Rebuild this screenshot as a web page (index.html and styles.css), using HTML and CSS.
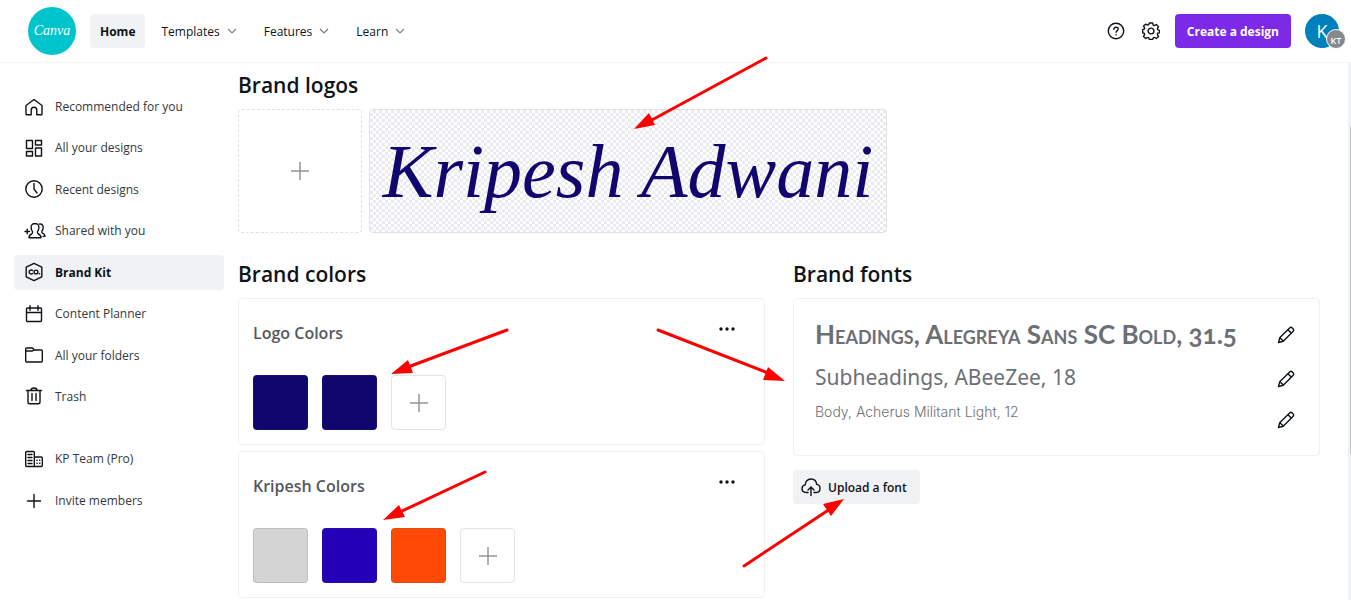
FILE: index.html
```html
<!DOCTYPE html>
<html lang="en">
<head>
<meta charset="utf-8">
<meta name="viewport" content="width=device-width, initial-scale=1">
<title>Brand Kit - Canva</title>
<link rel="stylesheet" href="styles.css">
</head>
<body>
<svg class="defs" width="0" height="0" aria-hidden="true">
  <symbol id="chevron" viewBox="0 0 10 6"><path d="M1 1l4 4 4-4"/></symbol>
  <symbol id="plus" viewBox="0 0 18 18"><path d="M9 0v18M0 9h18"/></symbol>
  <symbol id="pencil" viewBox="0 0 18 18"><path d="M1.500 16.500l1.200-4.700L12.600 2c.8-.8 1.800-.8 2.600 0l.8.8c.8.8.8 1.800 0 2.600L6.200 15.300zM11 3.800L14.200 7M2.900 11.700l3.400 3.400"/></symbol>
  <symbol id="dots" viewBox="0 0 16 4"><circle cx="2" cy="2" r="1.700"/><circle cx="8" cy="2" r="1.700"/><circle cx="14" cy="2" r="1.700"/></symbol>
</svg>

<header class="topbar">
  <a class="brand" href="#" aria-label="Canva home"><span>Canva</span></a>
  <nav class="topnav" aria-label="Main">
    <a class="topnav-link is-active" href="#">Home</a>
    <a class="topnav-link" href="#">Templates<svg class="chevron"><use href="#chevron"/></svg></a>
    <a class="topnav-link" href="#">Features<svg class="chevron"><use href="#chevron"/></svg></a>
    <a class="topnav-link" href="#">Learn<svg class="chevron"><use href="#chevron"/></svg></a>
  </nav>
  <div class="actions">
    <button class="icon-button" aria-label="Help">
      <svg class="icon" viewBox="0 0 18 18"><circle cx="9" cy="9" r="7.700"/><path d="M6.900 7.200c.1-1.300 1-2 2.200-2s2.100.8 2.100 1.900c0 1.500-2.100 1.500-2.100 3.200M9.100 12.600v.3"/></svg>
    </button>
    <button class="icon-button" aria-label="Settings">
      <svg class="icon" viewBox="0 0 18 18"><circle cx="9" cy="9" r="2.900"/><path d="M7.400 1h3.200l.6 2.100 1.100.5 2-1.100 2.200 2.200-1.100 2 .5 1.100 1.600.5v1.400l-.1 1.200-1.700.4-.4 1.100 1.200 2-2.200 2.100-2-1.100-1.100.5-.6 1.600H7.400l-.6-1.600-1.100-.5-2 1.100-2.200-2.100 1.200-2-.5-1.100-1.500-.4V7.700l1.500-.5.5-1.100-1.200-2 2.200-1.900 2 .9 1.100-.5z"/></svg>
    </button>
    <button class="create">Create a design</button>
    <button class="account" aria-label="Account"><span class="avatar">K</span><span class="team">KT</span></button>
  </div>
</header>

<div class="layout">
  <nav class="sidebar" aria-label="Library">
    <ul class="side-list side-main">
      <li><a class="side-link" href="#"><svg class="icon side-icon" viewBox="0 0 20 20"><path d="M2 8.500L10 2.500l8 6V17q0 .8-.8.8h-4.400V13q0-2.800-2.800-2.800T7.200 13v4.800H2.800Q2 17.800 2 17z"/></svg>Recommended for you</a></li>
      <li><a class="side-link" href="#"><svg class="icon side-icon" viewBox="0 0 20 20"><path d="M2.500 2.500h6v8h-6zM11.500 2.500h6v4.500h-6zM2.500 13.500h6V18h-6zM11.500 10h6v8h-6z"/></svg>All your designs</a></li>
      <li><a class="side-link" href="#"><svg class="icon side-icon" viewBox="0 0 20 20"><circle cx="10" cy="10" r="8.200"/><path d="M10 4.500V10l3 4"/></svg>Recent designs</a></li>
      <li><a class="side-link" href="#"><svg class="icon side-icon wide" viewBox="0 0 22 20"><path d="M1 10.500h4.500M3.200 8.200v4.500M11 2.500c-2.600 0-4 1.700-3.900 4 .1 2 .7 3.200 1.400 4 .4 1.500 0 2-.9 2.500-1.700.6-2.600 1.700-2.600 3.800H17c0-2.100-.9-3.200-2.600-3.800-.9-.5-1.300-1-.9-2.500.7-.8 1.300-2 1.400-4 .1-2.300-1.300-4-3.900-4zM15.500 3c2.300-.4 3.800 1 3.700 3.500-.1 1.800-.5 2.800-1.300 3.600-.3 1.300 0 1.900.9 2.300 1.500.5 2.100 1.400 2.200 3h-2"/></svg>Shared with you</a></li>
      <li><a class="side-link is-active" href="#" aria-current="page"><svg class="icon side-icon" viewBox="0 0 20 20"><path d="M10 1.300l7.800 3.900v9.600L10 18.700l-7.800-3.900V5.200zM8.600 8.600a2 2 0 1 0 0 2.800"/><circle cx="12" cy="10" r="1.900"/><path d="M15.300 11.700h.3"/></svg>Brand Kit</a></li>
      <li><a class="side-link" href="#"><svg class="icon side-icon" viewBox="0 0 20 20"><rect x="2.500" y="4" width="15" height="13.500" rx="1"/><path d="M2.500 8.500h15M6 1.800v4.400M14 1.800v4.400"/></svg>Content Planner</a></li>
      <li><a class="side-link" href="#"><svg class="icon side-icon" viewBox="0 0 20 20"><path d="M1.700 6V4q0-1 1-1h5.800l1.700 2h7.100q1 0 1 1v10q0 1-1 1H2.700q-1 0-1-1zM2 6h6.500l1.700-1"/></svg>All your folders</a></li>
      <li><a class="side-link" href="#"><svg class="icon side-icon" viewBox="0 0 20 20"><path d="M2.500 4.500h15M4 4.500V16q0 1.800 1.800 1.800h8.400q1.800 0 1.800-1.800V4.500M7 4.500q0-2.500 3-2.500t3 2.500M8 7.500v7M12 7.500v7"/></svg>Trash</a></li>
    </ul>
    <ul class="side-list side-team">
      <li><a class="side-link" href="#"><svg class="icon side-icon" viewBox="0 0 20 20"><path d="M1.700 3.500q0-1 1-1h6.600q1 0 1 1v14H2.700q-1 0-1-1zM10.300 8h7q1 0 1 1v7.500q0 1-1 1h-7M4 5.500h4M4 8.500h4M4 11.500h4M4 14.500h4M12.900 11.200h.3M15.600 11.200h.3M12.900 14.300h.3M15.600 14.300h.3"/></svg>KP Team (Pro)</a></li>
      <li><a class="side-link" href="#"><svg class="icon side-icon" viewBox="0 0 20 20"><path d="M10 3.500v13M3.500 10h13"/></svg>Invite members</a></li>
    </ul>
  </nav>

  <main class="content">
    <section>
      <h2 class="section-title">Brand logos</h2>
      <div class="logos">
        <button class="add-logo" aria-label="Add a logo"><svg class="plus"><use href="#plus"/></svg></button>
        <button class="logo-tile">Kripesh Adwani</button>
      </div>
    </section>
    <div class="columns">
      <section>
        <h2 class="section-title">Brand colors</h2>
        <div class="palettes">
          <article class="palette">
            <div class="palette-head"><h3>Logo Colors</h3><button class="more" aria-label="Logo Colors options"><svg class="dots"><use href="#dots"/></svg></button></div>
            <div class="swatches">
              <button class="swatch navy" aria-label="Navy"></button>
              <button class="swatch navy" aria-label="Navy"></button>
              <button class="swatch add" aria-label="Add a color"><svg class="plus"><use href="#plus"/></svg></button>
            </div>
          </article>
          <article class="palette">
            <div class="palette-head"><h3>Kripesh Colors</h3><button class="more" aria-label="Kripesh Colors options"><svg class="dots"><use href="#dots"/></svg></button></div>
            <div class="swatches">
              <button class="swatch silver" aria-label="Silver"></button>
              <button class="swatch indigo" aria-label="Indigo"></button>
              <button class="swatch orange" aria-label="Orange"></button>
              <button class="swatch add" aria-label="Add a color"><svg class="plus"><use href="#plus"/></svg></button>
            </div>
          </article>
        </div>
      </section>
      <section>
        <h2 class="section-title">Brand fonts</h2>
        <div class="fonts">
          <div class="font-row"><span class="font-heading">Headings, Alegreya Sans SC Bold, 31.5</span><button class="edit" aria-label="Edit headings"><svg class="icon"><use href="#pencil"/></svg></button></div>
          <div class="font-row"><span class="font-sub">Subheadings, ABeeZee, 18</span><button class="edit" aria-label="Edit subheadings"><svg class="icon"><use href="#pencil"/></svg></button></div>
          <div class="font-row"><span class="font-body">Body, Acherus Militant Light, 12</span><button class="edit" aria-label="Edit body"><svg class="icon"><use href="#pencil"/></svg></button></div>
        </div>
        <button class="upload"><svg class="icon" viewBox="0 0 20 20"><path d="M7 15.500H5.300C2.800 15.500 1 13.800 1 11.600c0-1.900 1.300-3.400 3.200-3.700C4.200 4.700 6.500 2 9.900 2c3.200 0 5.500 2.300 5.800 5.400 2 .3 3.300 1.900 3.300 4 0 2.400-1.700 4.100-4.100 4.100H13M10 18.500v-8M7 13l3-3 3 3"/></svg>Upload a font</button>
      </section>
    </div>
  </main>
</div>

<div class="scroll-track" aria-hidden="true"><div class="scroll-thumb"></div></div>

<svg class="arrows" viewBox="0 0 1351 600" aria-hidden="true">
  <path class="shaft" d="M766 58L650 121M507 330L408 367M485 472L400 512M658 330L768 373M744 566L830 509"/>
  <path class="head" d="M634 129l15-16 6 12zM391 374l17-14 5 13zM383 520l16-15 6 12zM785 381l-22-1 5-13zM844 499l-13 17-8-12z"/>
</svg>
</body>
</html>
```

FILE: styles.css
```css
* { box-sizing: border-box; }

body {
  margin: 0;
  background: #fff;
  color: #0e1318;
  font: 12px/21px "Open Sans", sans-serif;
  height: 100vh;
  overflow: hidden;
  position: relative;
}

button { font: inherit; color: inherit; border: 0; padding: 0; background: none; cursor: pointer; }
a { color: inherit; text-decoration: none; }
h2, h3, ul { margin: 0; padding: 0; }
ul { list-style: none; }

.defs { position: absolute; }

.icon {
  width: 18px;
  height: 18px;
  flex: none;
  fill: none;
  stroke: #0e1318;
  stroke-width: 1.4;
  stroke-linejoin: round;
  stroke-linecap: round;
}

.topbar {
  display: flex;
  align-items: center;
  gap: 14px;
  height: 63px;
  padding: 0 8px 0 28px;
  border-bottom: 1px dotted #e4e6e9;
}

.brand {
  display: grid;
  place-items: center;
  width: 48px;
  height: 48px;
  border-radius: 50%;
  background: #00c4cc;
  color: #fff;
  font: italic 14px/20px "Liberation Serif", serif;
}

.topnav { display: flex; gap: 8px; }

.topnav-link {
  display: flex;
  align-items: center;
  gap: 7px;
  height: 34px;
  padding: 0 11px 0 8px;
  border-radius: 4px;
}

.topnav-link.is-active { padding: 0 10px; background: #f1f2f4; font-weight: 700; }

.chevron { width: 10px; height: 6px; fill: none; stroke: #7d8288; stroke-width: 1.2; }

.actions { display: flex; align-items: center; gap: 17px; margin-left: auto; }
.icon-button { display: grid; width: 18px; height: 18px; }

.create {
  height: 34px;
  padding: 0 12px;
  margin-left: -2px;
  border-radius: 4px;
  background: #7d2ae8;
  color: #fff;
  font-weight: 700;
}

.account { position: relative; width: 38px; height: 34px; margin-left: -3px; }

.avatar {
  display: grid;
  place-items: center;
  width: 34px;
  height: 34px;
  border-radius: 50%;
  background: #0080bb;
  color: #fff;
  font-size: 18px;
}

.team {
  position: absolute;
  right: -3px;
  bottom: -1px;
  display: grid;
  place-items: center;
  width: 20px;
  height: 20px;
  border: 1px solid #fff;
  border-radius: 50%;
  background: #87888c;
  color: #fff;
  font-size: 9px;
  font-weight: 600;
}

.layout { display: flex; }

.sidebar {
  display: flex;
  flex-direction: column;
  gap: 27px;
  width: 224px;
  flex: none;
  padding: 26px 0 0 14px;
}

.side-list { display: flex; flex-direction: column; justify-content: space-between; }
.side-main { min-height: 325px; }
.side-team { gap: 7px; }

.side-link {
  display: flex;
  align-items: center;
  gap: 11px;
  height: 35px;
  padding: 0 10px;
  border-radius: 4px;
  color: #33373c;
}

.side-link.is-active { background: #f1f2f4; color: #0e1318; font-weight: 700; }
.side-icon { width: 20px; height: 20px; }
.wide { width: 22px; margin-right: -2px; }

.content { flex: 1; min-width: 0; padding: 8px 31px 0 14px; }

.section-title { font-size: 21px; line-height: 28px; font-weight: 600; }

.logos { display: flex; gap: 7px; margin-top: 10px; }

.add-logo {
  display: grid;
  place-items: center;
  width: 124px;
  height: 124px;
  border: 1px dashed #dfe1e4;
  border-radius: 4px;
}

.logo-tile {
  width: 518px;
  height: 124px;
  border: 1px solid #dfe1e4;
  border-radius: 4px;
  background: repeating-conic-gradient(#e9ebee 0 25%, #fff 0 50%) 0 0 / 6px 6px;
  color: #10066e;
  font: italic 76px/110px "Liberation Serif", serif;
  white-space: nowrap;
}

.plus { width: 18px; height: 18px; stroke: #919499; stroke-width: 1.5; }

.columns { display: grid; grid-template-columns: 1fr 1fr; gap: 28px; margin-top: 27px; }
.palettes { display: grid; gap: 6px; margin-top: 10px; }

.palette {
  height: 147px;
  padding: 20px 14px 14px;
  border: 1px solid #f0f1f3;
  border-radius: 4px;
}

.palette-head { display: flex; justify-content: space-between; padding-right: 15px; }
.palette-head h3 { color: #54585d; font-size: 16px; line-height: 28px; font-weight: 600; }
.more { display: grid; place-items: center; width: 16px; height: 20px; }
.dots { width: 16px; height: 4px; fill: #0e1318; }
.swatches { display: flex; gap: 14px; margin-top: 28px; }

.swatch { display: grid; place-items: center; width: 55px; height: 55px; border: 1px solid rgba(57, 76, 96, .15); border-radius: 4px; }
.navy { background: #10066e; }
.silver { background: #d4d4d4; }
.indigo { background: #2400b8; }
.orange { background: #ff4a05; }

.fonts {
  margin-top: 10px;
  padding: 14px 24px 16px 21px;
  border: 1px solid #f0f1f3;
  border-radius: 4px;
  color: #6c7076;
}

.font-row { display: flex; justify-content: space-between; height: 44px; }
.font-row:last-child { height: 38px; }
.font-heading { font: 700 26px/42px Lato, sans-serif; font-variant: small-caps oldstyle-nums; }
.font-sub { font: 21px/40px "Noto Sans", sans-serif; }
.font-body { font: 300 14px/22px Inter, sans-serif; }
.edit { display: grid; place-items: center; width: 18px; }

.upload {
  display: flex;
  align-items: center;
  gap: 7px;
  height: 34px;
  margin-top: 14px;
  padding: 0 13px 0 8px;
  border-radius: 4px;
  background: #f1f2f4;
  font-weight: 600;
}

.upload .icon { width: 20px; height: 20px; }

.scroll-track {
  position: absolute;
  top: 62px;
  right: 0;
  bottom: 0;
  width: 3px;
  padding-top: 64px;
  background: #f1f2f4;
}

.scroll-thumb { width: 1px; height: 328px; margin-left: auto; background: #bfc2c6; }

.arrows {
  position: absolute;
  top: 0;
  left: 0;
  width: 1351px;
  height: 600px;
  pointer-events: none;
}

.shaft { fill: none; stroke: #f00; stroke-width: 3; stroke-linecap: round; }
.head { fill: #f00; }
```
